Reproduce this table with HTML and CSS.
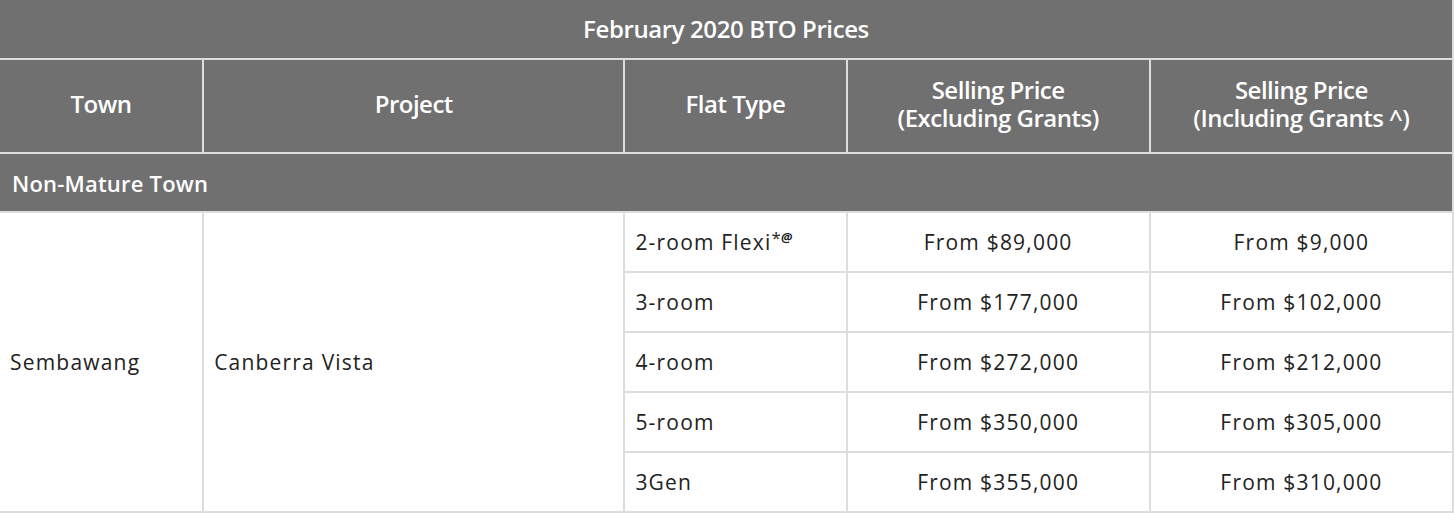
FILE: index.html
```html
<!DOCTYPE html>
<html>
<head>
<meta charset="utf-8">
<link rel="stylesheet" href="styles.css">
</head>
<body>
<table class="prices">
  <colgroup>
    <col class="c-town">
    <col class="c-project">
    <col class="c-flat">
    <col class="c-price">
    <col class="c-price">
  </colgroup>
  <thead>
    <tr class="title-row">
      <th colspan="5" class="first-col first-row">February 2020 BTO Prices</th>
    </tr>
    <tr class="head-row">
      <th class="first-col">Town</th>
      <th>Project</th>
      <th>Flat Type</th>
      <th>Selling Price<br>(Excluding Grants)</th>
      <th>Selling Price<br>(Including Grants ^)</th>
    </tr>
  </thead>
  <tbody>
    <tr class="section-row">
      <td colspan="5" class="first-col">Non-Mature Town</td>
    </tr>
    <tr class="body-row">
      <td rowspan="5" class="first-col left">Sembawang</td>
      <td rowspan="5" class="left">Canberra Vista</td>
      <td class="left">2-room Flexi<sup class="mark">*<span class="at">@</span></sup></td>
      <td class="center">From $89,000</td>
      <td class="center">From $9,000</td>
    </tr>
    <tr class="body-row">
      <td class="left">3-room</td>
      <td class="center">From $177,000</td>
      <td class="center">From $102,000</td>
    </tr>
    <tr class="body-row">
      <td class="left">4-room</td>
      <td class="center">From $272,000</td>
      <td class="center">From $212,000</td>
    </tr>
    <tr class="body-row">
      <td class="left">5-room</td>
      <td class="center">From $350,000</td>
      <td class="center">From $305,000</td>
    </tr>
    <tr class="body-row">
      <td class="left">3Gen</td>
      <td class="center">From $355,000</td>
      <td class="center">From $310,000</td>
    </tr>
  </tbody>
</table>
</body>
</html>
```

FILE: styles.css
```css
html, body {
  margin: 0;
  padding: 0;
  background: #ffffff;
}

.prices {
  width: 1454px;
  border-collapse: collapse;
  table-layout: fixed;
  font-family: "Open Sans", Lato, sans-serif;
  font-size: 21px;
  letter-spacing: 1.2px;
  color: #222222;
}

.c-town { width: 203px; }
.c-project { width: 421px; }
.c-flat { width: 222px; }
.c-price { width: 303px; }

.prices th,
.prices td {
  border: 2px solid #dddddd;
  padding: 0 10px;
  box-sizing: border-box;
}

.prices .first-col { border-left: none; }
.prices .first-row { border-top: none; }

.prices th {
  background: #707070;
  color: #ffffff;
  font-weight: 600;
  font-stretch: 88%;
  letter-spacing: -0.5px;
  text-align: center;
  line-height: 28px;
  font-size: 24px;
}

.title-row th {
  height: 59px;
  font-size: 24px;
  font-stretch: 100%;
  letter-spacing: -0.4px;
}

.head-row th {
  height: 94px;
  padding-bottom: 4px;
}

.section-row td {
  background: #707070;
  color: #ffffff;
  font-weight: 600;
  font-size: 22px;
  letter-spacing: 0.2px;
  height: 59px;
  padding-left: 12px;
}

.body-row td {
  height: 60px;
  background: #ffffff;
}

.left { text-align: left; }
.center { text-align: center; }

.mark {
  font-size: 17px;
  vertical-align: 6px;
  line-height: 0;
  letter-spacing: 0;
}

.at {
  font-weight: 700;
  font-style: italic;
  font-size: 13px;
  vertical-align: 2px;
}
```
